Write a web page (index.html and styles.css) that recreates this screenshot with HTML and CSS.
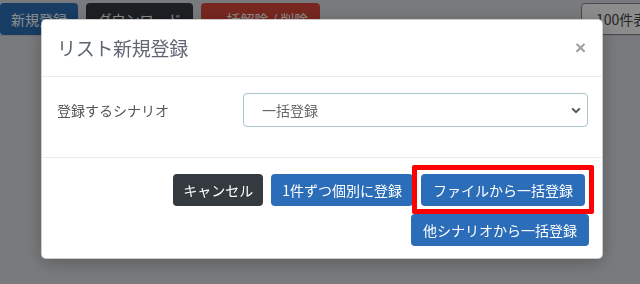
FILE: index.html
```html
<!DOCTYPE html>
<html lang="ja">
<head>
<meta charset="utf-8">
<title>リスト新規登録</title>
<link rel="stylesheet" href="styles.css">
</head>
<body>
<div class="page">
  <div class="toolbar">
    <div class="tools-left">
      <span class="pbtn pbtn-blue">新規登録</span>
      <span class="pbtn pbtn-dark">ダウンロード</span>
      <span class="pbtn pbtn-red">一括解除 / 削除</span>
    </div>
    <div class="tools-right">
      <span class="pbtn pbtn-outline">100件表示</span>
    </div>
  </div>
  <div class="content"></div>
</div>
<div class="backdrop"></div>
<div class="modal">
  <div class="modal-header">
    <h5 class="modal-title">リスト新規登録</h5>
    <span class="close">×</span>
  </div>
  <div class="modal-body">
    <div class="form-row">
      <label class="form-label">登録するシナリオ</label>
      <div class="select">
        <span class="select-value">一括登録</span>
        <svg class="chevron" width="10" height="7" viewBox="0 0 10 7"><path d="M1.2 1.4 L5 5.2 L8.8 1.4" fill="none" stroke="#555" stroke-width="2"/></svg>
      </div>
    </div>
  </div>
  <div class="modal-footer">
    <button class="btn btn-dark">キャンセル</button>
    <button class="btn btn-blue">1件ずつ個別に登録</button>
    <button class="btn btn-blue btn-marked">ファイルから一括登録</button>
    <button class="btn btn-blue btn-last">他シナリオから一括登録</button>
  </div>
</div>
</body>
</html>
```

FILE: styles.css
```css
* { box-sizing: border-box; }
html, body {
  margin: 0;
  padding: 0;
  width: 640px;
  height: 284px;
  overflow: hidden;
  font-family: "Noto Sans CJK JP", "Noto Sans", sans-serif;
}
body { background: #dcdfe3; }

.page { width: 640px; height: 284px; }
.toolbar {
  display: flex;
  justify-content: space-between;
  height: 36px;
  padding-top: 3px;
  border-bottom: 1px solid #c8ccd0;
}
.tools-left { display: flex; gap: 8px; }
.tools-right { width: 59px; overflow: hidden; }
.pbtn {
  display: flex;
  align-items: center;
  justify-content: center;
  height: 32px;
  border-radius: 4px;
  font-size: 14px;
  color: #fff;
  white-space: nowrap;
  overflow: hidden;
}
.pbtn-blue { background: #2d6fb8; width: 78px; }
.pbtn-dark { background: #343a40; width: 107px; }
.pbtn-red { background: #d9483b; width: 119px; }
.pbtn-outline {
  background: #fff;
  color: #444;
  border: 1px solid #888;
  width: 90px;
  justify-content: flex-start;
  padding-left: 14px;
}

.backdrop {
  position: fixed;
  inset: 0;
  background: rgba(0, 0, 0, 0.45);
}

.modal {
  position: fixed;
  left: 41px;
  top: 19px;
  width: 562px;
  height: 240px;
  background: #fff;
  border: 1px solid rgba(0, 0, 0, 0.2);
  border-radius: 5px;
  box-shadow: 0 4px 18px rgba(0, 0, 0, 0.25);
}
.modal-header {
  display: flex;
  align-items: center;
  justify-content: space-between;
  height: 57px;
  padding: 0 16px 2px 15px;
  border-bottom: 1px solid #e9ecef;
}
.modal-title {
  margin: 0;
  font-size: 19px;
  font-weight: normal;
  color: #5f6772;
  letter-spacing: -0.3px;
}
.close {
  font-family: "Liberation Sans", Arial, sans-serif;
  font-size: 19px;
  line-height: 1;
  font-weight: bold;
  color: #a0a0a0;
}

.modal-body {
  height: 81px;
  padding: 16px 14px 0 15px;
  border-bottom: 1px solid #e9ecef;
}
.form-row {
  display: flex;
  align-items: center;
}
.form-label {
  width: 186px;
  font-size: 14px;
  color: #555;
}
.select {
  display: flex;
  align-items: center;
  justify-content: space-between;
  width: 345px;
  height: 34px;
  padding: 0 6px 0 18px;
  border: 1px solid #a9c6cb;
  border-radius: 4px;
  font-size: 14px;
  color: #666;
}

.modal-footer {
  display: flex;
  flex-wrap: wrap;
  justify-content: flex-end;
  padding: 12px;
}
.btn {
  height: 32px;
  margin: 4px;
  padding: 0 11px;
  border: none;
  border-radius: 4px;
  font-family: "Noto Sans CJK JP", "Noto Sans", sans-serif;
  font-size: 14px;
  color: #fff;
  white-space: nowrap;
}
.btn-dark { background: #343a40; padding: 0 10px; }
.btn-blue { background: #2b6db8; }
.btn-marked {
  position: relative;
  margin-right: 5px;
  padding: 0 12px;
}
.btn-marked::after {
  content: "";
  position: absolute;
  inset: -9px -9px -8px -9px;
  border: 5px solid #ff0000;
  border-radius: 2px;
}
.btn-last { margin-right: 1px; padding: 0 12px; }
```
